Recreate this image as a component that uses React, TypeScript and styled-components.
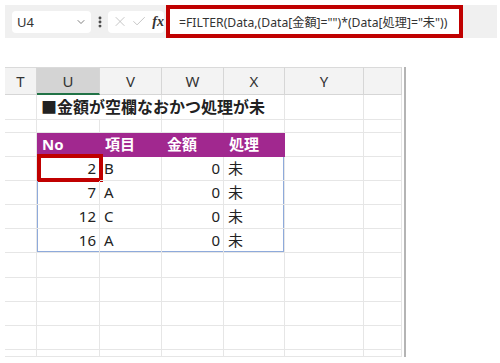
import styled, { createGlobalStyle } from "styled-components";
import { Check, ChevronDown, EllipsisVertical, X } from "lucide-react";

const GlobalStyle = createGlobalStyle`
  body {
    margin: 0;
    background: #fff;
    font-family: "Noto Sans", "Noto Sans CJK JP", sans-serif;
    color: #222;
  }
  * { box-sizing: border-box; }
`;

const Toolbar = styled.div`
  display: flex;
  align-items: center;
  margin: 5px 0 0 5px;
  width: 492px;
  height: 33px;
  background: #f0f0f0;
`;

const NameBox = styled.div`
  display: flex;
  align-items: center;
  justify-content: space-between;
  margin-left: 7px;
  width: 79px;
  height: 22px;
  padding: 0 4px 0 5px;
  background: #fff;
  border-radius: 4px;
  font-size: 13px;
  color: #333;
`;

const Dots = styled.div`
  display: flex;
  justify-content: center;
  width: 17px;
  color: #444;
`;

const FnBox = styled.div`
  display: flex;
  align-items: center;
  gap: 3px;
  width: 56px;
  height: 22px;
  padding-left: 4px;
  background: #fff;
  border-radius: 4px;
  color: #b8b8b8;
`;

const Fx = styled.span`
  margin-left: 2px;
  font-family: "Liberation Serif", serif;
  font-style: italic;
  font-weight: bold;
  font-size: 14px;
  color: #333;
`;

const FormulaBox = styled.div`
  display: flex;
  align-items: center;
  margin-left: 2px;
  width: 297px;
  height: 33px;
  padding-left: 9px;
  background: #fff;
  border: 4px solid #c00000;
  font-size: 12.2px;
  color: #333;
  white-space: nowrap;
`;

const Sheet = styled.div`
  display: grid;
  grid-template-columns: 32px 63px 62px 62px 61px 79px 38px;
  grid-template-rows: 28px 25px 13px 24px repeat(4, 24px) 25px 24px 24px 24px 7px;
  width: 401px;
  margin: 29px 0 0 5px;
  border-right: 2px solid #b4b4b4;
  overflow: hidden;
`;

const ColHead = styled.div<{ $active?: boolean }>`
  display: flex;
  align-items: center;
  justify-content: center;
  background: ${(p) => (p.$active ? "#d4d4d4" : "#f3f3f3")};
  border-top: 1px solid #dadada;
  border-right: 1px solid #d6d6d6;
  border-bottom: ${(p) => (p.$active ? "2px solid #217346" : "1px solid #d6d6d6")};
  font-size: 15px;
  color: #333;
`;

const Cell = styled.div<{ $right?: boolean; $shadow?: string }>`
  position: relative;
  display: flex;
  align-items: center;
  justify-content: ${(p) => (p.$right ? "flex-end" : "flex-start")};
  padding: 0 3px 2px 4px;
  border-right: 1px solid #e6e6e6;
  border-bottom: 1px solid #e6e6e6;
  box-shadow: ${(p) => p.$shadow || "none"};
  font-size: 15px;
  white-space: nowrap;
`;

const Title = styled(Cell)`
  overflow: visible;
  z-index: 1;
  padding-left: 4px;
  font-size: 16px;
  font-weight: bold;
  border-right: none;
`;

const TableHead = styled.div`
  display: flex;
  align-items: center;
  padding: 0 0 3px 5px;
  background: #a1288f;
  color: #fff;
  font-size: 15px;
  font-weight: bold;
`;

const Highlight = styled.div`
  position: absolute;
  top: -3px;
  left: 0;
  right: -4px;
  bottom: -2px;
  border: 4px solid #c00000;
  pointer-events: none;
`;

const columns = ["T", "U", "V", "W", "X", "Y", "Z"];
const rows = [
  { no: 2, item: "B", amount: 0, state: "未" },
  { no: 7, item: "A", amount: 0, state: "未" },
  { no: 12, item: "C", amount: 0, state: "未" },
  { no: 16, item: "A", amount: 0, state: "未" },
];

const blue = "#8eaadb";

function edge(col: number, row: number, last: number) {
  const s: string[] = [];
  if (col === 0) s.push(`inset 1px 0 0 ${blue}`);
  if (col === 3) s.push(`inset -1px 0 0 ${blue}`);
  if (row === last) s.push(`inset 0 -1px 0 ${blue}`);
  return s.join(", ");
}

export default function App() {
  return (
    <>
      <GlobalStyle />
      <Toolbar>
        <NameBox>
          U4
          <ChevronDown size={12} strokeWidth={1.5} color="#555" />
        </NameBox>
        <Dots>
          <EllipsisVertical size={14} strokeWidth={3} />
        </Dots>
        <FnBox>
          <X size={17} strokeWidth={1.2} />
          <Check size={17} strokeWidth={1.2} />
          <Fx>fx</Fx>
        </FnBox>
        <FormulaBox>=FILTER(Data,(Data[金額]="")*(Data[処理]="未"))</FormulaBox>
      </Toolbar>

      <Sheet>
        {columns.map((c) => (
          <ColHead key={c} $active={c === "U"}>
            {c === "Z" ? "" : c}
          </ColHead>
        ))}

        <Cell />
        <Title>■金額が空欄なおかつ処理が未</Title>
        <Cell />
        <Cell />
        <Cell />
        <Cell />
        <Cell />

        {columns.map((c) => (
          <Cell key={"s" + c} />
        ))}

        <Cell />
        <TableHead>No</TableHead>
        <TableHead>項目</TableHead>
        <TableHead>金額</TableHead>
        <TableHead>処理</TableHead>
        <Cell />
        <Cell />

        {rows.map((r, i) => {
          const last = rows.length - 1;
          return [
            <Cell key={i + "t"} />,
            <Cell key={i + "u"} $right $shadow={edge(0, i, last)}>
              {r.no}
              {i === 0 && <Highlight />}
            </Cell>,
            <Cell key={i + "v"} $shadow={edge(1, i, last)}>
              {r.item}
            </Cell>,
            <Cell key={i + "w"} $right $shadow={edge(2, i, last)}>
              {r.amount}
            </Cell>,
            <Cell key={i + "x"} $shadow={edge(3, i, last)}>
              {r.state}
            </Cell>,
            <Cell key={i + "y"} />,
            <Cell key={i + "z"} />,
          ];
        })}

        {[0, 1, 2, 3, 4].map((r) =>
          columns.map((c) => <Cell key={"e" + r + c} />)
        )}
      </Sheet>
    </>
  );
}
